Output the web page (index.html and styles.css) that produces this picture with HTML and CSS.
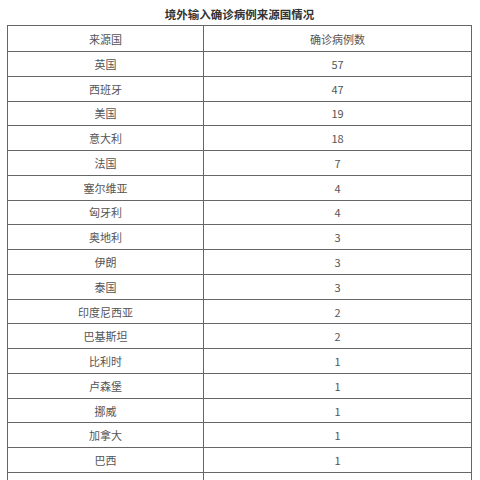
FILE: index.html
```html
<!DOCTYPE html>
<html lang="zh">
<head>
<meta charset="utf-8">
<link rel="stylesheet" href="styles.css">
</head>
<body>
<div class="page">
  <h1 class="title">境外输入确诊病例来源国情况</h1>
  <table class="data">
    <thead>
      <tr><th>来源国</th><th>确诊病例数</th></tr>
    </thead>
    <tbody>
      <tr><td>英国</td><td>57</td></tr>
      <tr><td>西班牙</td><td>47</td></tr>
      <tr><td>美国</td><td>19</td></tr>
      <tr><td>意大利</td><td>18</td></tr>
      <tr><td>法国</td><td>7</td></tr>
      <tr><td>塞尔维亚</td><td>4</td></tr>
      <tr><td>匈牙利</td><td>4</td></tr>
      <tr><td>奥地利</td><td>3</td></tr>
      <tr><td>伊朗</td><td>3</td></tr>
      <tr><td>泰国</td><td>3</td></tr>
      <tr><td>印度尼西亚</td><td>2</td></tr>
      <tr><td>巴基斯坦</td><td>2</td></tr>
      <tr><td>比利时</td><td>1</td></tr>
      <tr><td>卢森堡</td><td>1</td></tr>
      <tr><td>挪威</td><td>1</td></tr>
      <tr><td>加拿大</td><td>1</td></tr>
      <tr><td>巴西</td><td>1</td></tr>
      <tr><td>荷兰</td><td>1</td></tr>
    </tbody>
  </table>
</div>
</body>
</html>
```

FILE: styles.css
```css
html, body {
  margin: 0;
  padding: 0;
  background: #ffffff;
}
.page {
  padding: 7px 8px 0 7px;
  font-family: "Noto Sans CJK SC", "Noto Sans", sans-serif;
  color: #555555;
}
.title {
  margin: 0;
  height: 18px;
  font-size: 11.5px;
  line-height: 15px;
  font-weight: bold;
  text-align: center;
  color: #333333;
}
.data {
  width: 465px;
  border-collapse: collapse;
  table-layout: fixed;
}
.data th, .data td {
  border: 1px solid #666666;
  padding: 0;
  text-align: center;
  font-size: 11px;
  font-weight: normal;
  color: #555555;
}
.data th:first-child, .data td:first-child {
  width: 195px;
}
.data thead tr {
  height: 26px;
}
.data tbody tr {
  height: 24.78px;
}
```
